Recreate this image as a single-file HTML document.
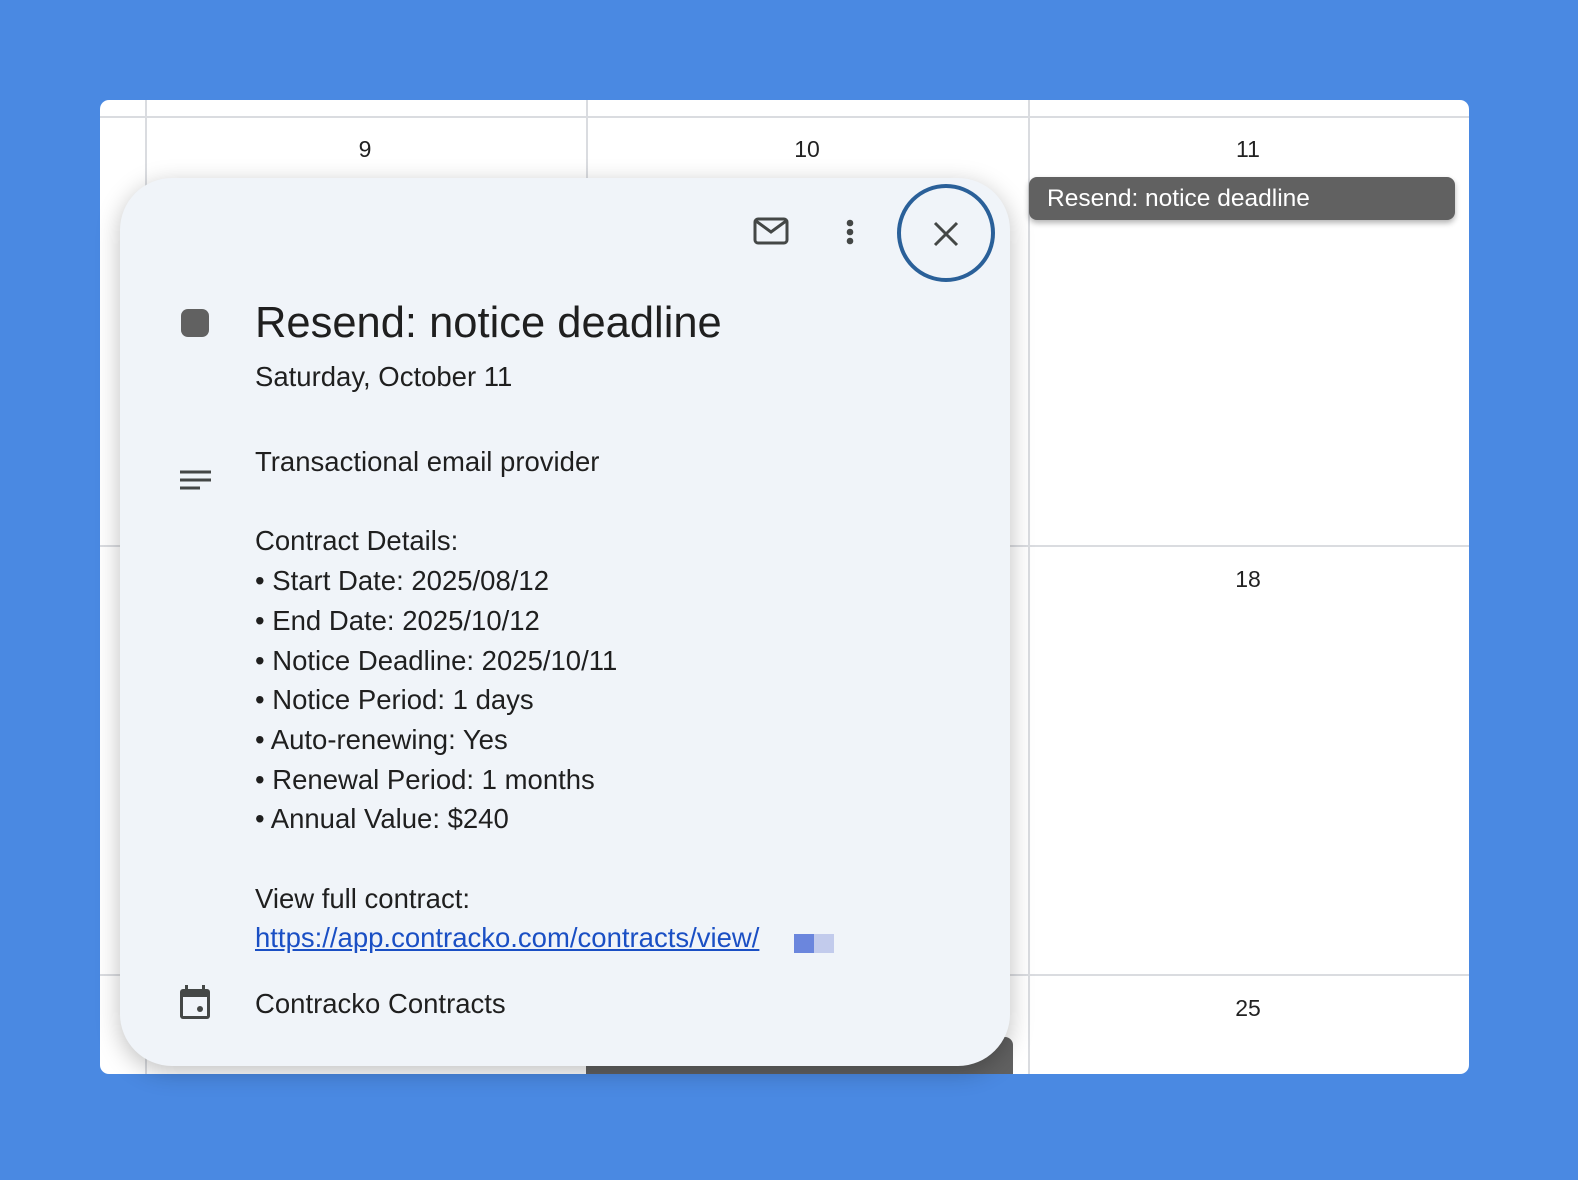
<!DOCTYPE html>
<html><head><meta charset="utf-8"><style>
*{margin:0;padding:0;box-sizing:border-box}
body{width:1578px;height:1180px;background:#4a89e2;font-family:"Liberation Sans",sans-serif;position:relative;overflow:hidden}
.card{position:absolute;left:100px;top:100px;width:1369px;height:974px;background:#fff;border-radius:9px;overflow:hidden}
.hl{position:absolute;left:0;right:0;height:2px;background:#dadce0}
.vl{position:absolute;top:0;bottom:0;width:2px;background:#dadce0}
.num{position:absolute;font-size:23px;color:#222;text-align:center;width:60px}
.ev{position:absolute;left:929px;top:77px;width:426px;height:43px;background:#616161;border-radius:8px;color:#fff;font-size:24.5px;line-height:43px;padding-left:18px;box-shadow:0 3px 6px rgba(0,0,0,.3)}
.ev2{position:absolute;left:486px;top:937px;width:427px;height:50px;background:#616161;border-radius:8px}
.pop{position:absolute;left:120px;top:178px;width:890px;height:888px;background:#f0f4f9;border-radius:52px;box-shadow:0 6px 24px rgba(0,0,0,.25)}
.t{position:absolute;left:135px;color:#1f1f1f}
.body{font-size:27.5px;line-height:39.7px;color:#1f1f1f}
a{color:#1a4fc4;text-decoration:underline}
</style></head><body>
<div class="card">
<div class="hl" style="top:16px"></div>
<div class="hl" style="top:445px"></div>
<div class="hl" style="top:874px"></div>
<div class="vl" style="left:45px"></div>
<div class="vl" style="left:486px"></div>
<div class="vl" style="left:928px"></div>
<div class="num" style="left:235px;top:36px">9</div>
<div class="num" style="left:677px;top:36px">10</div>
<div class="num" style="left:1118px;top:36px">11</div>
<div class="num" style="left:1118px;top:466px">18</div>
<div class="num" style="left:1118px;top:895px">25</div>
<div class="ev">Resend: notice deadline</div>
<div class="ev2"></div>
</div>
<div class="pop">
<svg style="position:absolute;left:632px;top:36px" width="40" height="36" viewBox="0 0 40 36"><rect x="3" y="5" width="32" height="24" rx="3" fill="none" stroke="#444746" stroke-width="3"/><path d="M4 7 L19 18 L34 7" fill="none" stroke="#444746" stroke-width="3"/></svg>
<svg style="position:absolute;left:724px;top:40px" width="12" height="30"><circle cx="6" cy="5" r="3.3" fill="#444746"/><circle cx="6" cy="14" r="3.3" fill="#444746"/><circle cx="6" cy="23" r="3.3" fill="#444746"/></svg>
<div style="position:absolute;left:777px;top:6px;width:98px;height:98px;border:4px solid #2a6099;border-radius:50%"></div>
<svg style="position:absolute;left:812px;top:42px" width="28" height="28"><path d="M3 3L25 25M25 3L3 25" stroke="#444746" stroke-width="3"/></svg>
<div style="position:absolute;left:61px;top:131px;width:28px;height:28px;background:#616161;border-radius:7px"></div>
<div class="t" style="top:120px;font-size:43.5px;line-height:50px">Resend: notice deadline</div>
<div class="t body" style="top:179px">Saturday, October 11</div>
<svg style="position:absolute;left:60px;top:292px" width="32" height="24"><path d="M0 2H31M0 10H31M0 18H20" stroke="#444746" stroke-width="3"/></svg>
<div class="t body" style="top:264px">Transactional email provider<br><br>Contract Details:<br>• Start Date: 2025/08/12<br>• End Date: 2025/10/12<br>• Notice Deadline: 2025/10/11<br>• Notice Period: 1 days<br>• Auto-renewing: Yes<br>• Renewal Period: 1 months<br>• Annual Value: $240<br><br>View full contract:<br><a>https://app.contracko.com/contracts/view/</a></div>
<div style="position:absolute;left:674px;top:756px;width:20px;height:19px;background:#6b86dd"></div>
<div style="position:absolute;left:694px;top:756px;width:20px;height:19px;background:#c2cbec"></div>
<svg style="position:absolute;left:59px;top:806px" width="32" height="36" viewBox="0 0 32 36"><rect x="1" y="5" width="30" height="30" rx="3" fill="#444746"/><rect x="4" y="13" width="24" height="19" fill="#f0f4f9"/><rect x="6" y="1" width="3" height="6" fill="#444746"/><rect x="23" y="1" width="3" height="6" fill="#444746"/><circle cx="21" cy="25" r="3" fill="#444746"/></svg>
<div class="t body" style="top:806px">Contracko Contracts</div>
</div>
</body></html>
